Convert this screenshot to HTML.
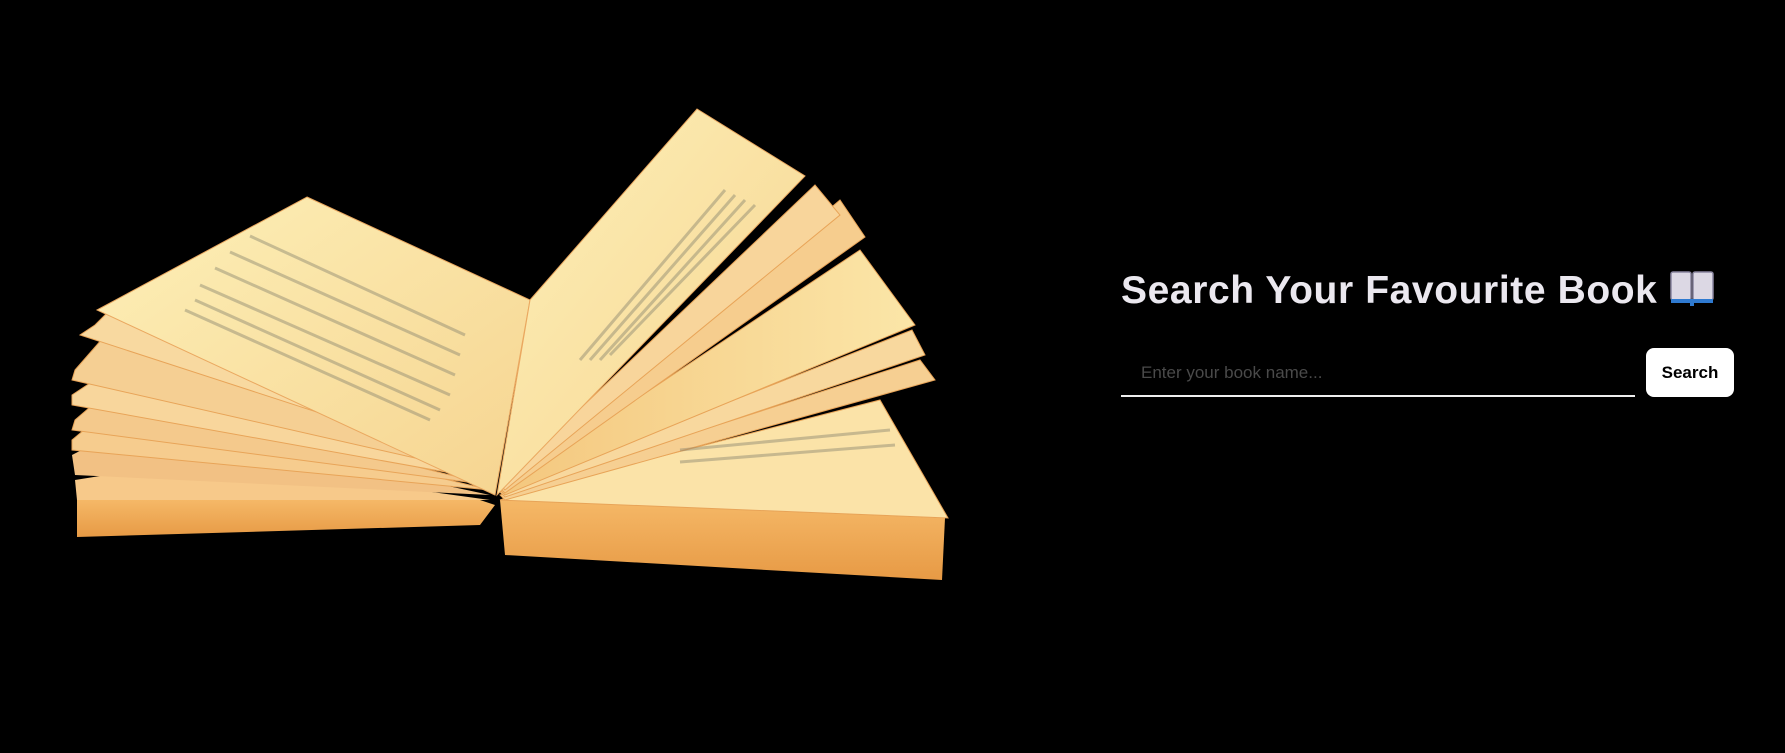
<!DOCTYPE html>
<html><head><meta charset="utf-8"><style>
html,body{margin:0;padding:0;background:#000;width:1785px;height:753px;overflow:hidden;font-family:"Liberation Sans",sans-serif}
h1{position:absolute;left:1121px;top:268px;margin:0;color:#ebe8ef;font-size:39px;font-weight:bold;letter-spacing:0.6px;white-space:nowrap}
.inp{position:absolute;left:1121px;top:352px;width:514px;height:43px;border-bottom:2px solid #eee}
.inp span{position:absolute;left:20px;top:11px;color:#4a4a4a;font-size:17px}
.btn{position:absolute;left:1646px;top:348px;width:88px;height:49px;background:#fff;border-radius:8px;color:#000;font-weight:bold;font-size:17px;text-align:center;line-height:49px}
</style></head><body>
<svg width="1000" height="753" style="position:absolute;left:0;top:0">
<defs>
<linearGradient id="pg" x1="0" y1="0" x2="1" y2="1"><stop offset="0" stop-color="#fdf0b8"/><stop offset="1" stop-color="#f6d490"/></linearGradient>
<linearGradient id="pg2" x1="0" y1="0" x2="1" y2="0"><stop offset="0" stop-color="#f4c77e"/><stop offset="1" stop-color="#fbe6a8"/></linearGradient>
<linearGradient id="ed" x1="0" y1="0" x2="0" y2="1"><stop offset="0" stop-color="#f5b867"/><stop offset="1" stop-color="#e79a45"/></linearGradient>
</defs>
<polygon points="500,500 945,518 942,580 505,555" fill="url(#ed)"/>
<polygon points="77,500 480,500 495,505 480,525 77,537" fill="url(#ed)"/>
<polygon points="75,480 200,460 490,500 77,500" fill="#f7c98a"/>
<polygon points="72,455 140,420 490,495 75,475" fill="#f2c184"/>
<polygon points="72,440 120,400 490,490 72,450" fill="#f6cc8e" stroke="#e8a458"/>
<polygon points="75,420 110,390 490,485 72,430" fill="#f4c98c" stroke="#e8a458"/>
<polygon points="72,395 125,360 490,480 72,405" fill="#f8d69c" stroke="#e8a458"/>
<polygon points="75,370 110,330 490,475 72,380" fill="#f5cf93" stroke="#e8a458"/>
<polygon points="95,325 120,300 495,470 80,335" fill="#f8d9a0" stroke="#e8a458"/>
<polygon points="307,197 530,300 495,495 97,310" fill="url(#pg)" stroke="#eaa860"/>
<polygon points="530,490 880,400 948,518 500,500" fill="#fbe3a8" stroke="#e8a458"/>
<polygon points="500,495 920,360 935,380 505,500" fill="#f6cf92" stroke="#e8a458"/>
<polygon points="500,492 912,330 925,355 505,497" fill="#f8d89e" stroke="#e8a458"/>
<polygon points="500,490 860,250 915,325 505,495" fill="url(#pg2)" stroke="#e8a458"/>
<polygon points="500,488 840,200 865,237 505,493" fill="#f6cd8e" stroke="#e8a458"/>
<polygon points="500,485 815,185 840,215 505,490" fill="#f8d59b" stroke="#e8a458"/>
<polygon points="530,300 697,109 805,176 497,495" fill="url(#pg)" stroke="#eaa860"/>
<g stroke="#8a8670" stroke-width="3" opacity="0.45">
<line x1="195" y1="300" x2="440" y2="410"/><line x1="185" y1="310" x2="430" y2="420"/>
<line x1="200" y1="285" x2="450" y2="395"/><line x1="215" y1="268" x2="455" y2="375"/>
<line x1="230" y1="252" x2="460" y2="355"/><line x1="250" y1="236" x2="465" y2="335"/>
<line x1="580" y1="360" x2="725" y2="190"/><line x1="590" y1="360" x2="735" y2="195"/>
<line x1="600" y1="360" x2="745" y2="200"/><line x1="610" y1="355" x2="755" y2="205"/>
<line x1="680" y1="450" x2="890" y2="430"/><line x1="680" y1="462" x2="895" y2="445"/>
</g>
</svg>
<h1>Search Your Favourite Book <svg width="46" height="40" viewBox="0 0 46 40" style="vertical-align:-5px"><rect x="2" y="4" width="20" height="28" rx="2" fill="#dcd8e4" stroke="#8a86a0" stroke-width="1.5"/><rect x="24" y="4" width="20" height="28" rx="2" fill="#dcd8e4" stroke="#8a86a0" stroke-width="1.5"/><rect x="2" y="31" width="42" height="4" fill="#2f7ad0"/><rect x="21" y="34" width="4" height="4" fill="#2f7ad0"/></svg></h1>
<div class="inp"><span>Enter your book name...</span></div>
<div class="btn">Search</div>
</body></html>
